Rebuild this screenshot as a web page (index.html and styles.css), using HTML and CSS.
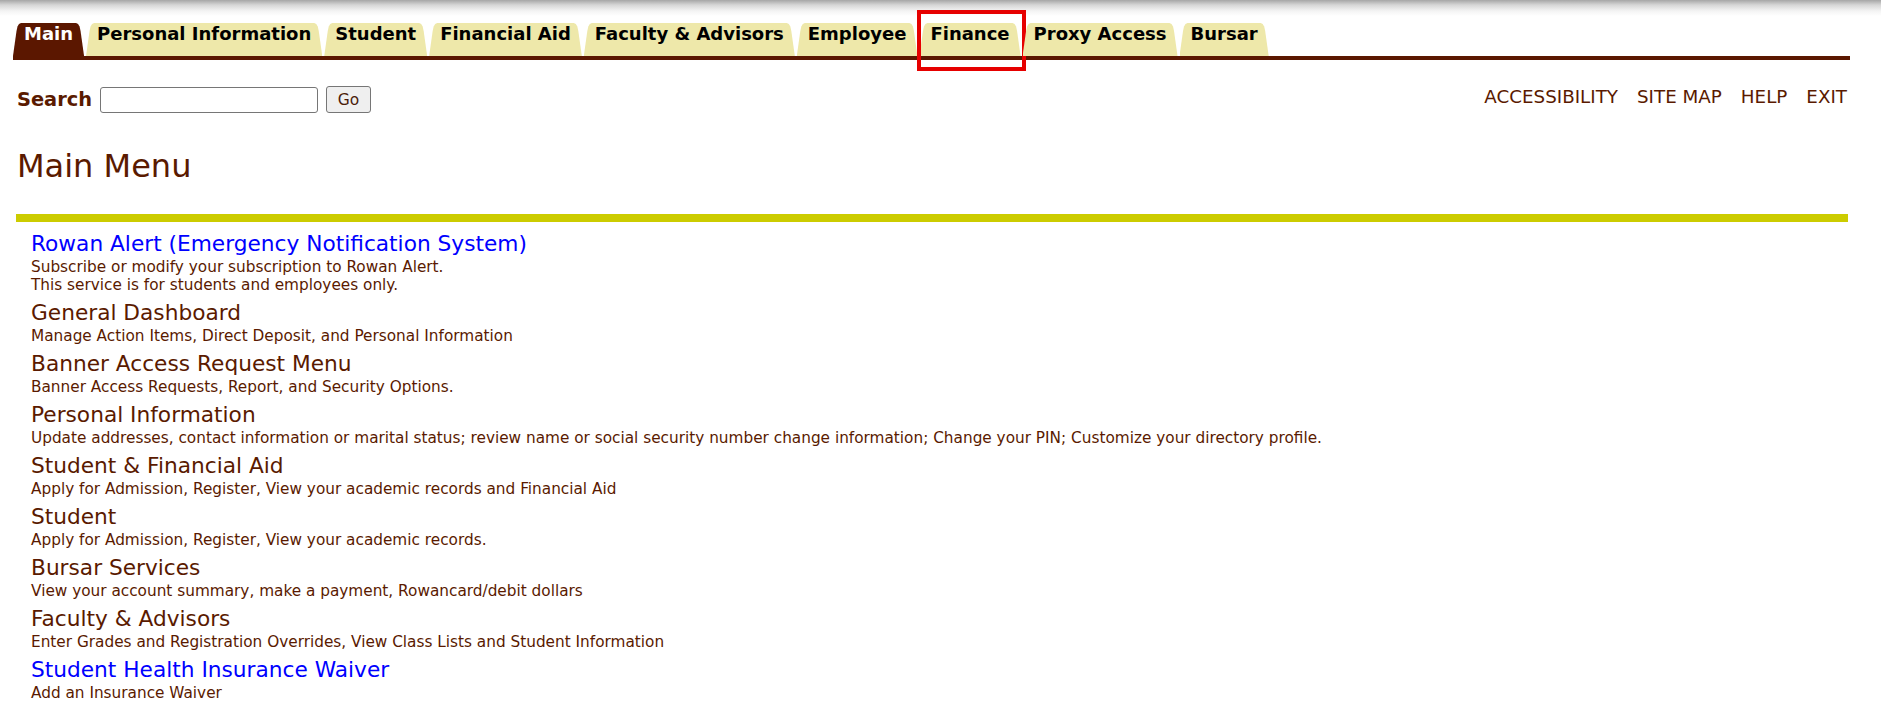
FILE: index.html
```html
<!DOCTYPE html>
<html lang="en">
<head>
    <meta charset="UTF-8">
    <title>Main Menu</title>
    <link rel="stylesheet" href="styles.css">
</head>
<body>
    <div class="shade"></div>

    <!-- Tabs -->
    <nav class="tabs">
        <a class="tab ativa" href="#">Main</a>
        <a class="tab" href="#">Personal Information</a>
        <a class="tab" href="#">Student</a>
        <a class="tab" href="#">Financial Aid</a>
        <a class="tab" href="#">Faculty &amp; Advisors</a>
        <a class="tab" href="#">Employee</a>
        <a class="tab" href="#">Finance<span class="callout"></span></a>
        <a class="tab" href="#">Proxy Access</a>
        <a class="tab" href="#">Bursar</a>
    </nav>

    <!-- Search + links -->
    <div class="searchbar">
        <form class="search" onsubmit="return false">
            <label for="q">Search</label>
            <input type="text" id="q">
            <button type="button">Go</button>
        </form>
        <ul class="toplinks">
            <li><a href="#">ACCESSIBILITY</a></li>
            <li><a href="#">SITE MAP</a></li>
            <li><a href="#">HELP</a></li>
            <li><a href="#">EXIT</a></li>
        </ul>
    </div>

    <h1 class="titulo">Main Menu</h1>
    <div class="rule"></div>

    <ul class="menu">
        <li>
            <a class="item-link blue" href="#">Rowan Alert (Emergency Notification System)</a>
            <div class="desc">Subscribe or modify your subscription to Rowan Alert.<br>This service is for students and employees only.</div>
        </li>
        <li>
            <a class="item-link" href="#">General Dashboard</a>
            <div class="desc">Manage Action Items, Direct Deposit, and Personal Information</div>
        </li>
        <li>
            <a class="item-link" href="#">Banner Access Request Menu</a>
            <div class="desc">Banner Access Requests, Report, and Security Options.</div>
        </li>
        <li>
            <a class="item-link" href="#">Personal Information</a>
            <div class="desc">Update addresses, contact information or marital status; review name or social security number change information; Change your PIN; Customize your directory profile.</div>
        </li>
        <li>
            <a class="item-link" href="#">Student &amp; Financial Aid</a>
            <div class="desc">Apply for Admission, Register, View your academic records and Financial Aid</div>
        </li>
        <li>
            <a class="item-link" href="#">Student</a>
            <div class="desc">Apply for Admission, Register, View your academic records.</div>
        </li>
        <li>
            <a class="item-link" href="#">Bursar Services</a>
            <div class="desc">View your account summary, make a payment, Rowancard/debit dollars</div>
        </li>
        <li>
            <a class="item-link" href="#">Faculty &amp; Advisors</a>
            <div class="desc">Enter Grades and Registration Overrides, View Class Lists and Student Information</div>
        </li>
        <li>
            <a class="item-link blue" href="#">Student Health Insurance Waiver</a>
            <div class="desc">Add an Insurance Waiver</div>
        </li>
    </ul>
</body>
</html>
```

FILE: styles.css
```css
:root {
    --marrom: #5a1a00;
    --marrom-aba: #5b1700;
    --aba: #eee8aa;
    --regua: #cccc00;
    --link: #0000ff;
}

body {
    margin: 0;
    font-family: "DejaVu Sans", Verdana, sans-serif;
    color: var(--marrom);
    background: #fff;
}

.shade {
    height: 16px;
    background: linear-gradient(to bottom, #a6a6a6 0, #d6d6d6 5px, #f4f4f4 11px, #fff 16px);
}

/* tabs */
.tabs {
    display: flex;
    gap: 2px;
    margin: 7px 31px 0 13px;
    border-bottom: 4px solid var(--marrom-aba);
}

.tab {
    position: relative;
    isolation: isolate;
    display: block;
    padding: 1px 11px 12px 11px;
    font-size: 18px;
    font-weight: bold;
    line-height: 20px;
    color: #000;
    text-decoration: none;
}

.tab::before {
    content: '';
    position: absolute;
    inset: 0;
    z-index: -1;
    background: var(--aba);
    clip-path: polygon(0 100%, 3.5px 8px, 4.5px 3.5px, 6px 1px, 8px 0,
        calc(100% - 8px) 0, calc(100% - 6px) 1px, calc(100% - 4.5px) 3.5px,
        calc(100% - 3.5px) 8px, 100% 100%);
}

.tab.ativa {
    color: #fff;
}

.tab.ativa::before {
    background: var(--marrom-aba);
}

.callout {
    position: absolute;
    left: -2px;
    right: -5px;
    top: -13px;
    bottom: -15px;
    border: 4px solid #e60000;
}

/* search row */
.searchbar {
    display: flex;
    justify-content: space-between;
    margin: 26px 34px 0 17px;
}

.search {
    display: flex;
    align-items: center;
    margin: 0;
}

.search label {
    font-size: 19.4px;
    font-weight: bold;
    margin-right: 8px;
}

.search input {
    box-sizing: border-box;
    width: 218px;
    height: 26px;
    margin: 0 8px 0 0;
    border: 1px solid #767676;
    border-radius: 3px;
}

.search button {
    box-sizing: border-box;
    width: 45px;
    height: 27px;
    padding: 0;
    font-family: inherit;
    font-size: 15.5px;
    color: #4b1d0a;
    background: #efefef;
    border: 1px solid #767676;
    border-radius: 3px;
}

.toplinks {
    display: flex;
    gap: 19px;
    list-style: none;
    margin: 0;
    padding: 0;
    font-size: 18.3px;
    line-height: 21px;
}

.toplinks a {
    color: var(--marrom);
    text-decoration: none;
}

/* title + rule */
.titulo {
    margin: 34px 0 0 17px;
    font-size: 32px;
    font-weight: normal;
    line-height: 38px;
}

.rule {
    height: 8px;
    margin: 29px 33px 0 16px;
    background: var(--regua);
}

/* menu */
.menu {
    list-style: none;
    margin: 10px 0 0 31px;
    padding: 0;
}

.menu li {
    margin-bottom: 7px;
}

.item-link {
    display: block;
    font-size: 21.7px;
    line-height: 24px;
    color: var(--marrom);
    text-decoration: none;
}

.item-link.blue {
    color: var(--link);
}

.desc {
    margin-top: 2px;
    font-size: 15.3px;
    line-height: 18px;
}
```
